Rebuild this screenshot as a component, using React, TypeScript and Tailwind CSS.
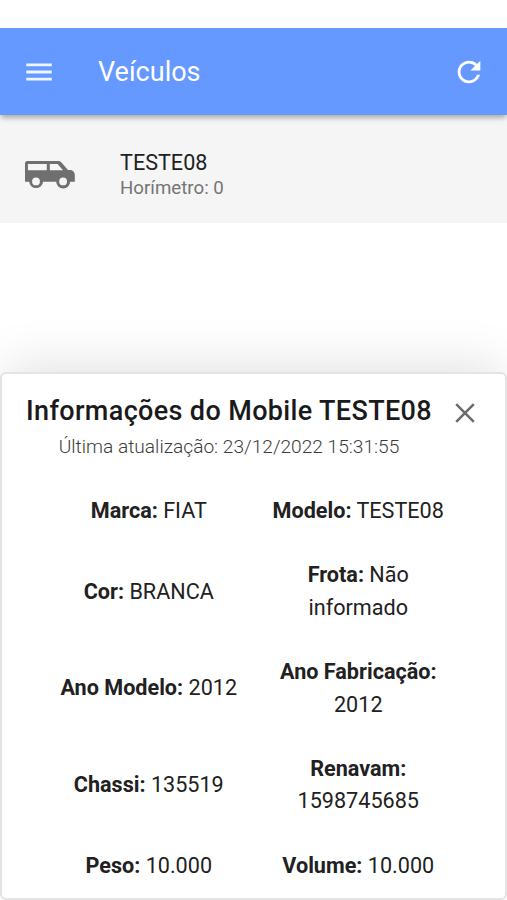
import { MdMenu, MdRefresh } from "react-icons/md";

const rows = [
  [
    { label: "Marca:", value: "FIAT" },
    { label: "Modelo:", value: "TESTE08" },
  ],
  [
    { label: "Cor:", value: "BRANCA" },
    { label: "Frota:", value: "Não informado" },
  ],
  [
    { label: "Ano Modelo:", value: "2012" },
    { label: "Ano Fabricação:", value: "2012" },
  ],
  [
    { label: "Chassi:", value: "135519" },
    { label: "Renavam:", value: "1598745685" },
  ],
  [
    { label: "Peso:", value: "10.000" },
    { label: "Volume:", value: "10.000" },
  ],
];

const VehicleIcon = () => {
  return (
    <svg className="w-[50px] h-7 shrink-0" viewBox="0 0 50 28" fill="#6f6f6f">
      <path
        fillRule="evenodd"
        d="M2.5 0H33.5Q35 0 36 1.1L43 9.1H45.2A4.6 4.6 0 0 1 49.8 13.7V20.7H45A6.8 6.8 0 0 1 31.4 20.7H18A6.8 6.8 0 0 1 4.6 20.7H0V2.5A2.5 2.5 0 0 1 2.5 0ZM2.9 2.9V9.2H21.8V2.9ZM24.8 2.9V9.2H38L32.6 2.9Z"
      />
      <circle cx="11" cy="20.4" r="5.3" fill="#f5f5f5" stroke="#6f6f6f" strokeWidth="2.8" />
      <circle cx="38.1" cy="20.4" r="5.3" fill="#f5f5f5" stroke="#6f6f6f" strokeWidth="2.8" />
    </svg>
  );
};

const Header = () => {
  return (
    <header className="relative z-10 mt-7 h-[87px] shrink-0 flex items-center bg-[#6699ff] pl-[22px] pr-[21px] text-white shadow-[0_4px_5px_-1px_rgba(0,0,0,0.3)]">
      <MdMenu className="w-[34px] h-[34px] opacity-90" />
      <h1 className="ml-[42px] text-[27px] leading-8 font-normal">Veículos</h1>
      <MdRefresh className="ml-auto w-[34px] h-[34px]" />
    </header>
  );
};

const VehicleItem = () => {
  return (
    <div className="h-[108px] shrink-0 flex items-center bg-[#f5f5f5] pl-[25px] pt-3">
      <VehicleIcon />
      <div className="ml-[45px] mt-px flex flex-col">
        <p className="text-[21.6px] leading-[25px] text-[#212121]">TESTE08</p>
        <p className="text-[18.7px] leading-[26px] text-[#757575]">Horímetro: 0</p>
      </div>
    </div>
  );
};

const App = () => {
  return (
    <div className="h-[900px] w-full flex flex-col overflow-hidden bg-white font-['Roboto',sans-serif]">
      <Header />
      <VehicleItem />
      <section className="mt-[149px] h-[528px] shrink-0 rounded-md border-2 border-[#e4e4e4] bg-white shadow-[0_-12px_48px_-6px_rgba(0,0,0,0.12)]">
        <div className="flex pl-6 pt-[21px]">
          <div className="w-[406px] shrink-0 text-center whitespace-nowrap">
            <h2 className="text-[27px] leading-8 font-medium tracking-[0.35px] text-[#1a1a1a]">
              Informações do Mobile TESTE08
            </h2>
            <p className="mt-1.5 text-[19.15px] leading-7 font-light text-[#3c3c3c]">
              Última atualização: 23/12/2022 15:31:55
            </p>
          </div>
          <svg className="ml-[23px] mt-2 w-5 h-5" viewBox="0 0 20 20" fill="none" stroke="#6b6b6b" strokeWidth="2.5">
            <path d="M1.2 1.2L18.8 18.8M18.8 1.2L1.2 18.8" />
          </svg>
        </div>
        <div className="mt-[18px] ml-[42px] w-[419px]">
          {rows.map((row) => (
            <div key={row[0].label} className="grid grid-cols-2 items-center py-4">
              {row.map((item) => (
                <p key={item.label} className="px-4 text-center text-[21.6px] leading-[32.4px] text-[#212121]">
                  <b className="font-bold">{item.label}</b> {item.value}
                </p>
              ))}
            </div>
          ))}
        </div>
      </section>
    </div>
  );
};

export default App;
